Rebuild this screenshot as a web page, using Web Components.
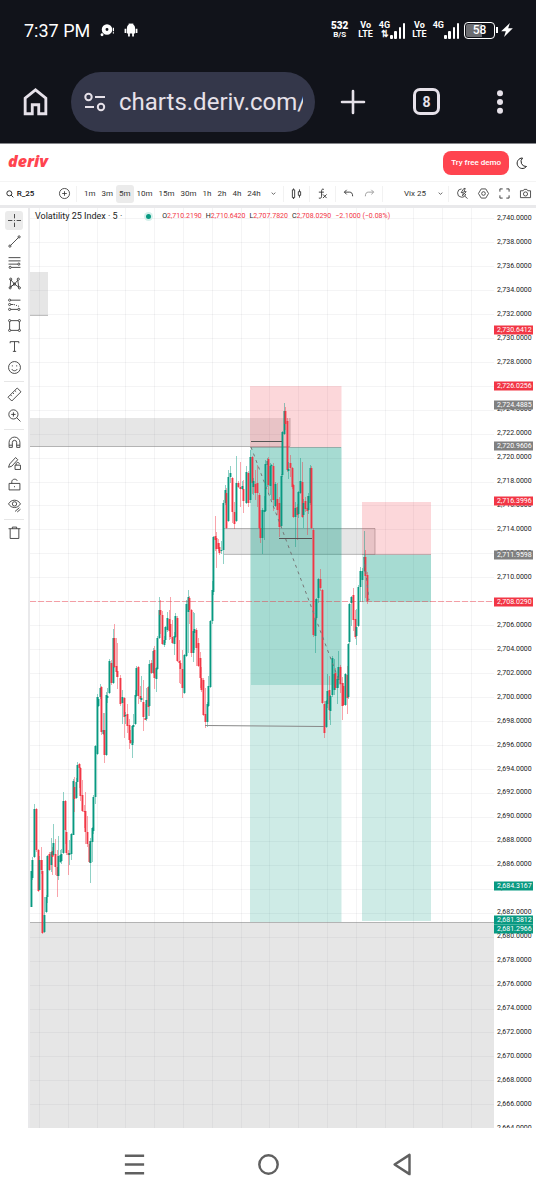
<!DOCTYPE html>
<html lang="en">
<head>
<meta charset="utf-8">
<meta name="viewport" content="width=device-width, initial-scale=1">
<title>Volatility 25 Index - Deriv charts</title>
<style>
  body {
    margin: 0;
    background: #fff;
    color: #222;
    font-family: Roboto, "Liberation Sans", sans-serif;
  }
</style>
</head>
<body>
<phone-screen>
  <status-bar slot="top"></status-bar>
  <browser-bar slot="top" url="charts.deriv.com/" tabs="8"></browser-bar>
  <site-header>Try free demo</site-header>
  <chart-toolbar symbol="R_25" active="5m" layout="Vix 25"></chart-toolbar>
  <chart-workspace>
    <drawing-tools slot="tools"></drawing-tools>
    <price-chart>
      <chart-legend slot="legend">Volatility 25 Index · 5 ·</chart-legend>
    </price-chart>
    <price-scale slot="scale"></price-scale>
  </chart-workspace>
  <nav-keys slot="bottom"></nav-keys>
</phone-screen>

<script>
/* Icons are drawn on a 24px grid. */
const ICONS = {
  home: `<path d="M4 21.5V9.5L12 3l8 6.5v12h-5.5v-7h-5v7z" stroke-width="2.2"/>`,
  tune: `<circle cx="5.5" cy="7" r="3.2"/><path d="M12 7h10M2 17h9"/><circle cx="18" cy="17" r="3.2"/>`,
  plus: `<path d="M12 1v22M1 12h22" stroke-width="2.6" stroke-linecap="round"/>`,
  dots: `<g fill="currentColor" stroke="none"><circle cx="12" cy="3.2" r="3"/><circle cx="12" cy="12" r="3"/><circle cx="12" cy="20.8" r="3"/></g>`,
  chat: `<g fill="currentColor" stroke="none"><path fill-rule="evenodd" d="M12 2a9 9 0 1 1 0 18a9 9 0 0 1 0-18zm0 6.5a2.5 2.5 0 1 0 0 5a2.5 2.5 0 0 0 0-5z"/><circle cx="3.5" cy="20" r="2.5"/><path d="M22 8h2v6h-2zM22 16h2v2h-2z"/></g>`,
  android: `<g fill="currentColor" stroke="none"><path d="M5 9a7 7 0 0 1 14 0v9h-2v5h-3v-5h-4v5H7v-5H5zM1 10h3v7H1zM20 10h3v7h-3z"/><path d="M8 1h8v3H8z"/></g>`,
  bolt: `<path fill="currentColor" stroke="none" d="M17 0L2 14h8l-3 10L22 9h-8z"/>`,
  moon: `<path d="M13 2A10.5 10.500 0 1 0 21 19A10 10 0 0 1 13 2z" stroke-width="2"/>`,
  search: `<circle cx="10" cy="10" r="7.5" stroke-width="2.6"/><path d="M15.5 15.5L22 22" stroke-width="2.6"/>`,
  add: `<circle cx="12" cy="12" r="11"/><path d="M12 7v10M7 12h10"/>`,
  chevron: `<path d="M3 8l9 8 9-8" stroke-width="3.4"/>`,
  candles: `<path d="M3 4h5v17H3zM5.5 1v3M5.5 21v3M16 8h5v8h-5zM18.5 3v5M18.5 16v5" stroke-width="2"/>`,
  fx: `<path d="M15 3c-4-2-5 1-5 4v11c0 4-2 5-6 4M4 9h11M13 14l8 8M21 14l-8 8" stroke-width="2"/>`,
  undo: `<path d="M8 4L3 9l5 5M3 9h11c5 0 7 3 7 9" stroke-width="2"/>`,
  redo: `<path d="M16 4l5 5-5 5M21 9H10c-5 0-7 3-7 9" stroke-width="2"/>`,
  quick: `<path d="M10 2A9 9 0 1 0 19 13M16 17l7 6M15 1L9 10h5l-2 7 8-9h-5l3-7z"/>`,
  settings: `<path d="M7 2h10l6 10-6 10H7L1 12z"/><circle cx="12" cy="12" r="4"/>`,
  full: `<path d="M2 8V2h6M16 2h6v6M22 16v6h-6M8 22H2v-6" stroke-width="2"/>`,
  camera: `<path d="M1 6h6l2-3h6l2 3h6v15H1z"/><circle cx="12" cy="13" r="4.5"/>`,
  cross: `<path d="M12 0v8M12 16v8M0 12h8M16 12h8M11 12h2"/>`,
  trend: `<path d="M5 19L19 5"/><circle cx="3.5" cy="20.5" r="2"/><circle cx="20.5" cy="3.5" r="2"/>`,
  fib: `<path d="M1 3h22M1 9h22M1 15h17M6 21h17"/><circle cx="20" cy="15" r="2"/><circle cx="4" cy="21" r="2"/>`,
  pattern: `<path d="M4 19L5 5l7 8 6-7 2 13-8-6zM5 18l7-5"/><circle cx="4" cy="20" r="2"/><circle cx="5" cy="4" r="2"/><circle cx="19" cy="4" r="2"/><circle cx="21" cy="20" r="2"/><circle cx="12" cy="13" r="2"/>`,
  forecast: `<path d="M5 4h18M5 12h5M5 21h13"/><path d="M11 12l11 4" stroke-dasharray="2 2"/><circle cx="3" cy="4" r="2"/><circle cx="3" cy="12" r="2"/><circle cx="3" cy="21" r="2"/><circle cx="20" cy="21" r="2"/>`,
  rect: `<path d="M5 3h14M5 21h14M3 5v14M21 5v14"/><circle cx="3" cy="3" r="2"/><circle cx="21" cy="3" r="2"/><circle cx="3" cy="21" r="2"/><circle cx="21" cy="21" r="2"/>`,
  text: `<path d="M4 6V3h16v3M12 3v18M9 21h6"/>`,
  smile: `<circle cx="12" cy="12" r="11"/><path d="M7 15c2 4 8 4 10 0M8 8v2M16 8v2"/>`,
  ruler: `<path d="M0 17L17 0l7 7L7 24zM5 13l2 2M9 9l2 2M13 5l2 2"/>`,
  zoom: `<circle cx="10" cy="10" r="8.5"/><path d="M10 6v8M6 10h8M16 16l7 7"/>`,
  magnet: `<path d="M2 21V12a10 10 0 0 1 20 0v9h-6v-9a4 4 0 0 0-8 0v9zM2 17h6M16 17h6"/>`,
  pencil: `<path d="M1 19l2-6L14 1l4 4L7 17zM13 15h10v8H13zM15 15v-2c0-4 6-4 6 0"/>`,
  lock: `<path d="M2 10h20v12H2zM7 10V7c0-6 9-6 10-2M12 15v2"/>`,
  eye: `<path d="M1 9c5-9 17-9 22 0-5 9-17 9-22 0z"/><circle cx="12" cy="9" r="4"/><path d="M13 23l8-7M17 24l6-5"/>`,
  trash: `<path d="M1 5h22M8 5V2h8v3M4 5v18h16V5"/>`,
  menu: `<path d="M1 2h22M1 12h22M1 22h22" stroke-width="2.8"/>`,
  circle: `<circle cx="12" cy="12" r="10.5" stroke-width="2.8"/>`,
  back: `<path d="M3 12L20 1v22z" stroke-width="2.8" stroke-linejoin="round"/>`,
};

class UiIcon extends HTMLElement {
  constructor() {
    super();
    this.attachShadow({ mode: "open" });
  }

  static get styles() {
    return /* css */`
      :host {
        display: inline-block;
        flex: none;
        width: var(--icon-size, 12px);
        height: var(--icon-size, 12px);
      }

      svg {
        display: block;
        width: 100%;
        height: 100%;
        overflow: visible;
        fill: none;
        stroke: currentColor;
        stroke-width: var(--icon-stroke, 1.6);
      }
    `;
  }

  connectedCallback() {
    this.shadowRoot.innerHTML = /* html */`
    <style>${UiIcon.styles}</style>
    <svg viewBox="0 0 24 24" aria-hidden="true">${ICONS[this.getAttribute("name")]}</svg>`;
  }
}

customElements.define("ui-icon", UiIcon);

/* Shared reset for every button in the page */
const BUTTON = /* css */`
  button {
    display: flex;
    align-items: center;
    justify-content: center;
    margin: 0;
    padding: 0;
    border: 0;
    background: none;
    color: inherit;
    font: inherit;
    cursor: pointer;
  }
`;

class PhoneScreen extends HTMLElement {
  constructor() {
    super();
    this.attachShadow({ mode: "open" });
  }

  connectedCallback() {
    this.shadowRoot.innerHTML = /* html */`
    <style>
      :host {
        display: flex;
        flex-direction: column;
        min-height: 100vh;
      }

      .top {
        background: #11131a;
        border-bottom: 1px solid #85868a;
      }

      main {
        flex: 1;
        display: flex;
        flex-direction: column;
      }
    </style>
    <div class="top"><slot name="top"></slot></div>
    <main><slot></slot></main>
    <slot name="bottom"></slot>`;
  }
}

customElements.define("phone-screen", PhoneScreen);

class StatusBar extends HTMLElement {
  constructor() {
    super();
    this.attachShadow({ mode: "open" });
  }

  static get styles() {
    return /* css */`
      :host {
        display: flex;
        align-items: center;
        height: 60px;
        padding: 0 22px 0 24px;
        color: #fff;
        --icon-size: 14px;
      }

      .time {
        font-size: 18px;
        margin-right: 10px;
      }

      .notices {
        display: flex;
        gap: 10px;
        flex: 1;
      }

      .signals {
        display: flex;
        align-items: center;
        gap: 6px;
      }

      .pair {
        display: flex;
        flex-direction: column;
        align-items: center;
        font-size: 9px;
        font-weight: 700;
        line-height: 9px;
      }

      .speed {
        margin-right: 4px;
        font-size: 8px;
      }

      .speed b {
        font-size: 10px;
      }

      .cell {
        display: flex;
        align-items: flex-end;
      }

      .cell .pair {
        height: 18px;
      }

      .cell svg {
        display: block;
        width: 16px;
        height: 17px;
        fill: #fff;
      }

      .battery {
        display: flex;
        align-items: center;
        margin-left: -2px;
      }

      .level {
        box-sizing: border-box;
        width: 31px;
        height: 17px;
        border: 1px solid #fff;
        border-radius: 4px;
        background: linear-gradient(90deg, #6b6c70 58%, transparent 58%) content-box;
        padding: 1px;
        font-size: 12px;
        font-weight: 500;
        line-height: 13px;
        text-align: center;
      }

      .cap {
        width: 2px;
        height: 6px;
        margin: 0 2px 0 1px;
        background: #fff;
      }
    `;
  }

  connectedCallback() {
    const bars = `<svg viewBox="0 0 16 17"><rect y="13" width="3" height="4" rx="1"/><rect x="4" y="9" width="3" height="8" rx="1"/><rect x="9" y="5" width="2" height="12" rx="1"/><rect x="13" y="1" width="2" height="16" rx="1"/></svg>`;
    this.shadowRoot.innerHTML = /* html */`
    <style>${StatusBar.styles}</style>
    <span class="time">7:37 PM</span>
    <div class="notices"><ui-icon name="chat"></ui-icon><ui-icon name="android"></ui-icon></div>
    <div class="signals">
      <span class="pair speed"><b>532</b><span>B/S</span></span>
      <span class="pair"><span>Vo</span><span>LTE</span></span>
      <span class="cell"><span class="pair"><span>4G</span><span>⇅</span></span>${bars}</span>
      <span class="pair"><span>Vo</span><span>LTE</span></span>
      <span class="cell"><span class="pair"><span>4G</span></span>${bars}</span>
      <span class="battery"><span class="level">58</span><span class="cap"></span><ui-icon name="bolt"></ui-icon></span>
    </div>`;
  }
}

customElements.define("status-bar", StatusBar);

class BrowserBar extends HTMLElement {
  constructor() {
    super();
    this.attachShadow({ mode: "open" });
  }

  static get styles() {
    return /* css */`
      :host {
        display: flex;
        align-items: center;
        height: 83px;
        padding: 0 24px 0 20px;
        color: #e6e1e9;
        --icon-size: 31px;
      }

      ${BUTTON}

      .address {
        flex: 1;
        min-width: 0;
        display: flex;
        align-items: center;
        gap: 12px;
        height: 60px;
        margin: 0 26px 0 20px;
        padding: 0 12px;
        box-sizing: border-box;
        border-radius: 30px;
        background: #34374a;
        --icon-size: 24px;
        --icon-stroke: 2;
      }

      input {
        flex: 1;
        min-width: 0;
        padding: 0;
        border: 0;
        background: none;
        color: inherit;
        font: 24px Roboto, "Liberation Sans", sans-serif;
        outline: 0;
      }

      .actions {
        display: flex;
        align-items: center;
        gap: 48px;
        --icon-size: 24px;
      }

      .tabs {
        box-sizing: border-box;
        width: 27px;
        height: 27px;
        border: 3px solid currentColor;
        border-radius: 7px;
        font-size: 14px;
        font-weight: 700;
      }
    `;
  }

  connectedCallback() {
    this.shadowRoot.innerHTML = /* html */`
    <style>${BrowserBar.styles}</style>
    <button aria-label="Home"><ui-icon name="home"></ui-icon></button>
    <div class="address">
      <ui-icon name="tune"></ui-icon>
      <input type="text" aria-label="Address" value="${this.getAttribute("url")}">
    </div>
    <div class="actions">
      <button aria-label="New tab"><ui-icon name="plus"></ui-icon></button>
      <button class="tabs" aria-label="Tabs">${this.getAttribute("tabs")}</button>
      <button aria-label="More"><ui-icon name="dots"></ui-icon></button>
    </div>`;
  }
}

customElements.define("browser-bar", BrowserBar);

class SiteHeader extends HTMLElement {
  constructor() {
    super();
    this.attachShadow({ mode: "open" });
  }

  static get styles() {
    return /* css */`
      :host {
        display: flex;
        align-items: center;
        height: 37px;
        padding: 0 8px;
      }

      ${BUTTON}

      a {
        flex: 1;
        color: #ff444f;
        font: italic 800 16px/18px "Open Sans", sans-serif;
        text-decoration: none;
        padding-bottom: 4px;
      }

      .demo {
        height: 24px;
        padding: 0 8px;
        border-radius: 8px;
        background: #ff444f;
        color: #fff;
        font-size: 8px;
        font-weight: 500;
        margin-right: 7px;
      }
    `;
  }

  connectedCallback() {
    this.shadowRoot.innerHTML = /* html */`
    <style>${SiteHeader.styles}</style>
    <a href="#">deriv</a>
    <button class="demo"><slot></slot></button>
    <button aria-label="Dark theme"><ui-icon name="moon"></ui-icon></button>`;
  }
}

customElements.define("site-header", SiteHeader);

class ChartToolbar extends HTMLElement {
  constructor() {
    super();
    this.attachShadow({ mode: "open" });
  }

  static get styles() {
    return /* css */`
      :host {
        display: flex;
        align-items: center;
        height: 23px;
        border-top: 1px solid #f4f4f4;
        border-bottom: 3px solid #e9e9eb;
        color: #333;
        font-size: 8px;
        --icon-size: 11px;
        --icon-stroke: 1.8;
      }

      ${BUTTON}

      .symbol {
        gap: 3px;
        width: 54px;
        margin-right: 4px;
        padding-right: 14px;
        box-sizing: border-box;
        color: #111;
        font-weight: 500;
        --icon-size: 8px;
      }

      .intervals {
        display: flex;
        margin-left: 4px;
      }

      .intervals button {
        height: 18px;
        padding: 0 3px;
        border-radius: 3px;
      }

      .intervals button.active {
        background: #ebebeb;
      }

      .small {
        --icon-size: 5px;
      }

      .group {
        display: flex;
        align-items: center;
        height: 16px;
        padding: 0 7px;
        border-right: 1px solid #f2f2f2;
      }

      .compare {
        padding: 0 6px 0 1px;
      }

      .history {
        gap: 10px;
      }

      .redo {
        opacity: 0.5;
      }

      .layout {
        flex: 1;
        justify-content: flex-end;
        gap: 12px;
        padding-right: 5px;
      }

      .view {
        gap: 10px;
        padding: 0 5px 0 8px;
        border: 0;
      }
    `;
  }

  connectedCallback() {
    const active = this.getAttribute("active");
    const intervals = ["1m", "3m", "5m", "10m", "15m", "30m", "1h", "2h", "4h", "24h"];
    this.shadowRoot.innerHTML = /* html */`
    <style>${ChartToolbar.styles}</style>
    <button class="symbol"><ui-icon name="search"></ui-icon>${this.getAttribute("symbol")}</button>
    <div class="group compare"><button aria-label="Compare"><ui-icon name="add"></ui-icon></button></div>
    <div class="intervals">
      ${intervals.map((t) => `<button class="${t === active ? "active" : ""}">${t}</button>`).join("")}
    </div>
    <div class="group small"><button aria-label="More intervals"><ui-icon name="chevron"></ui-icon></button></div>
    <div class="group"><button aria-label="Chart type"><ui-icon name="candles"></ui-icon></button></div>
    <div class="group"><button aria-label="Indicators"><ui-icon name="fx"></ui-icon></button></div>
    <div class="group history">
      <button aria-label="Undo"><ui-icon name="undo"></ui-icon></button>
      <button class="redo" aria-label="Redo"><ui-icon name="redo"></ui-icon></button>
    </div>
    <div class="group layout small">
      <button>${this.getAttribute("layout")}</button>
      <button aria-label="Layouts"><ui-icon name="chevron"></ui-icon></button>
    </div>
    <div class="group view">
      <button aria-label="Quick search"><ui-icon name="quick"></ui-icon></button>
      <button aria-label="Settings"><ui-icon name="settings"></ui-icon></button>
      <button aria-label="Fullscreen"><ui-icon name="full"></ui-icon></button>
      <button aria-label="Snapshot"><ui-icon name="camera"></ui-icon></button>
    </div>`;
  }
}

customElements.define("chart-toolbar", ChartToolbar);

class ChartWorkspace extends HTMLElement {
  constructor() {
    super();
    this.attachShadow({ mode: "open" });
  }

  connectedCallback() {
    this.shadowRoot.innerHTML = /* html */`
    <style>
      :host {
        flex: 1;
        display: flex;
        min-height: 480px;
      }
    </style>
    <slot name="tools"></slot>
    <slot></slot>
    <slot name="scale"></slot>`;
  }
}

customElements.define("chart-workspace", ChartWorkspace);

class DrawingTools extends HTMLElement {
  constructor() {
    super();
    this.attachShadow({ mode: "open" });
  }

  static get styles() {
    return /* css */`
      :host {
        display: flex;
        flex-direction: column;
        align-items: center;
        width: 28px;
        padding-top: 2px;
        border-right: 2px solid #e9e9eb;
        color: #333;
        --icon-size: 13px;
        --icon-stroke: 1.6;
      }

      ${BUTTON}

      button {
        width: 18px;
        height: 19px;
        margin: 1px 0;
        border-radius: 3px;
      }

      button.active {
        background: #ebebeb;
      }

      hr {
        width: 20px;
        height: 1px;
        margin: 3px 0 2px;
        border: 0;
        background: #e6e6e6;
      }
    `;
  }

  connectedCallback() {
    const groups = [
      ["cross", "trend", "fib", "pattern", "forecast", "rect", "text", "smile"],
      ["ruler", "zoom"],
      ["magnet", "pencil", "lock", "eye"],
      ["trash"],
    ];
    const button = (name) => `<button class="${name === "cross" ? "active" : ""}" aria-label="${name}"><ui-icon name="${name}"></ui-icon></button>`;
    this.shadowRoot.innerHTML = /* html */`
    <style>${DrawingTools.styles}</style>
    ${groups.map((g) => g.map(button).join("")).join("<hr>")}`;
  }
}

customElements.define("drawing-tools", DrawingTools);

class ChartLegend extends HTMLElement {
  constructor() {
    super();
    this.attachShadow({ mode: "open" });
  }

  static get styles() {
    return /* css */`
      :host {
        display: flex;
        align-items: center;
        height: 10px;
        font-size: 9px;
        line-height: 10px;
        white-space: nowrap;
        color: #222;
      }

      .dot {
        width: 5px;
        height: 5px;
        margin: 0 11px 0 24px;
        border-radius: 50%;
        background: #089981;
        box-shadow: 0 0 0 2px #d5f0eb;
      }

      .values {
        display: flex;
        gap: 4px;
        font-size: 7px;
      }

      b {
        color: #f23645;
        font-weight: 400;
      }
    `;
  }

  connectedCallback() {
    this.shadowRoot.innerHTML = /* html */`
    <style>${ChartLegend.styles}</style>
    <slot></slot><span class="dot"></span>
    <span class="values">
      <span>O<b>2,710.2190</b></span>
      <span>H<b>2,710.6420</b></span>
      <span>L<b>2,707.7820</b></span>
      <span>C<b>2,708.0290</b></span>
      <b>−2.1000 (−0.08%)</b>
    </span>`;
  }
}

customElements.define("chart-legend", ChartLegend);

/* One candle per entry: x, high, body top, body bottom, low, (u)p or (d)own */
const CANDLES = `
31 871 871 907 907 u,32 857 860 878 880 u,34 804 809 857 858 u,36 808 809 850 852 d,38 849 850 891 892 d,39 856 860 890 890 u,
41 847 860 870 874 d,42 860 871 933 934 d,44 897 915 932 933 u,46 895 897 912 913 u,47 855 856 897 903 u,49 852 854 870 871 d,
51 838 852 865 872 u,52 847 851 857 875 d,53 824 843 855 856 u,55 839 854 867 875 d,57 850 867 876 897 d,58 836 856 876 880 u,
60 850 855 862 863 u,61 849 854 861 864 u,63 792 801 853 854 u,65 800 801 830 844 d,66 830 832 853 855 d,68 850 853 855 875 d,
69 840 853 855 865 u,71 833 834 854 860 u,73 779 781 835 835 u,74 777 787 799 812 d,76 778 782 798 799 u,77 762 765 782 782 u,
79 763 764 768 788 d,80 767 768 796 801 d,82 780 795 811 812 d,84 805 811 812 828 d,85 792 811 832 844 d,87 816 832 844 847 d,
89 841 844 862 863 d,90 838 841 863 883 u,92 827 828 842 862 u,93 795 797 831 834 u,95 745 746 797 804 u,97 694 697 754 755 u,
98 697 699 706 707 u,100 684 688 697 699 u,101 686 687 732 735 d,103 713 730 734 735 u,104 713 730 755 763 d,106 692 695 755 756 u,
107 688 696 698 703 u,109 659 661 693 694 u,111 660 663 683 685 d,113 629 638 683 684 u,114 624 638 667 668 d,116 638 666 672 677 d,
117 643 671 677 689 d,120 675 678 704 706 d,122 690 697 703 724 u,124 697 698 717 738 d,125 712 715 716 724 u,127 704 714 726 733 d,
129 719 725 740 749 d,130 730 740 743 744 d,132 725 726 745 758 u,133 714 725 727 743 u,135 690 695 724 725 u,136 666 668 696 697 u,
138 666 667 696 704 d,140 686 696 699 702 d,141 676 698 700 702 u,143 680 702 717 731 d,145 704 718 720 720 d,146 688 700 719 721 u,
148 686 687 707 716 d,149 660 664 706 716 u,151 660 663 673 674 d,153 648 651 673 674 u,154 646 650 678 689 d,156 667 668 679 692 u,
157 636 638 669 670 u,159 597 610 638 639 u,160 600 610 615 634 d,162 611 615 644 645 d,164 636 640 645 647 u,165 626 627 640 643 u,
167 612 618 630 632 u,169 610 619 631 640 d,170 597 624 637 639 d,172 620 637 643 644 d,174 632 636 644 655 u,175 613 616 637 638 u,
177 616 618 661 662 d,179 640 661 663 683 d,180 660 663 669 684 d,182 650 669 688 698 d,184 654 655 693 694 u,186 600 604 656 657 u,
188 590 597 612 653 u,189 596 598 610 624 d,191 609 610 653 657 d,193 612 631 653 662 u,194 613 629 633 650 u,196 628 630 648 666 d,
198 638 643 666 667 d,200 652 658 678 688 d,201 667 678 690 692 d,203 678 680 715 716 d,205 688 714 722 728 d,207 702 704 722 727 u,
208 676 686 706 707 u,210 620 621 687 688 u,212 581 590 621 624 u,213 536 537 592 595 u,215 516 536 540 551 d,216 532 538 549 568 d,
218 539 543 549 551 d,219 543 547 553 555 d,221 541 550 551 554 u,223 500 503 550 564 u,225 485 490 503 505 u,226 488 493 528 529 d,
228 470 477 521 522 u,230 466 473 477 483 u,232 477 478 512 523 d,234 502 512 524 529 d,236 456 483 521 522 u,238 481 483 487 488 d,
240 462 487 489 507 d,242 481 486 489 490 u,243 480 489 501 513 d,246 466 472 503 504 u,248 471 473 503 507 d,250 450 457 500 503 u,
252 456 457 483 494 d,253 478 481 487 495 u,255 470 484 493 500 d,257 465 483 493 507 d,259 493 495 528 529 d,260 510 528 538 543 d,
262 508 510 538 554 u,264 496 510 512 540 u,265 460 464 511 512 u,267 458 461 465 487 u,268 457 459 485 493 d,270 463 466 486 495 u,
271 464 465 466 500 u,273 463 466 500 511 d,275 482 484 506 507 u,277 483 499 510 515 d,279 497 503 527 537 d,281 474 476 526 527 u,
282 431 432 475 477 u,284 403 411 434 435 u,285 407 411 424 430 d,287 418 421 470 472 d,288 462 469 471 479 u,290 455 463 468 477 d,
292 467 468 487 489 d,293 484 485 517 518 d,295 502 508 517 547 u,297 504 507 515 540 d,298 491 492 514 518 u,300 458 481 493 494 u,
302 462 482 517 518 d,303 499 503 515 528 u,305 497 501 509 512 d,307 496 508 511 535 d,308 493 496 510 514 u,310 465 468 503 505 u,
311 466 468 528 529 d,313 528 530 635 637 d,315 599 618 636 653 u,316 598 599 618 619 u,318 578 579 598 603 u,320 569 579 588 591 d,
322 589 590 703 704 d,324 701 704 733 738 d,326 700 701 727 728 u,327 674 691 704 708 u,329 676 690 710 720 d,330 695 696 711 725 u,
332 656 658 695 697 u,334 659 674 690 695 u,335 668 673 688 690 d,337 676 679 688 704 u,338 651 667 680 688 u,340 665 667 684 693 d,
342 677 683 706 720 d,343 683 686 705 706 d,345 673 674 705 706 u,347 666 675 698 714 d,348 643 644 697 699 u,349 603 604 642 644 u,
351 596 597 603 626 u,353 588 595 620 631 d,355 610 619 637 639 d,356 609 627 636 645 u,358 585 587 626 627 u,360 567 571 587 602 u,
362 568 571 580 602 u,364 531 557 571 572 u,365 550 557 576 598 d,367 572 575 601 604 d
`.trim().split(",").map((row) => row.trim().split(" "));

class PriceChart extends HTMLElement {
  constructor() {
    super();
    this.attachShadow({ mode: "open" });
  }

  static get styles() {
    return /* css */`
      :host {
        position: relative;
        flex: 1;
        min-width: 0;
        overflow: hidden;
      }

      svg {
        display: block;
        width: 100%;
        height: 100%;
      }

      .legend {
        position: absolute;
        top: 3px;
        left: 5px;
      }

      .grid {
        stroke: #2a2e39;
        stroke-opacity: 0.05;
      }

      .zone {
        fill: #808080;
        fill-opacity: 0.2;
      }

      .edge {
        fill: none;
        stroke: #808080;
        stroke-opacity: 0.5;
      }

      .loss {
        fill: #f23645;
        fill-opacity: 0.2;
      }

      .gain {
        fill: #089981;
        fill-opacity: 0.2;
      }

      .mark {
        fill: none;
        stroke: #555;
      }

      .low {
        stroke: #888;
      }

      .path {
        fill: none;
        stroke: #777;
        stroke-dasharray: 3 4;
      }

      .last {
        stroke: #f23645;
        stroke-opacity: 0.45;
        stroke-dasharray: 6 2;
      }

      .u { fill: #089981; }
      .d { fill: #f23645; }
      .wick { fill-opacity: 0.45; }
    `;
  }

  grid() {
    let lines = "";
    for (let i = 0; i < 16; i++) {
      const x = Math.round(39 + i * 28.8) + 0.5;
      lines += `<path d="M${x} 208V1128"/>`;
    }
    for (let i = 0; i < 38; i++) {
      const y = Math.round(218 + i * 23.955) + 0.5;
      lines += `<path d="M30 ${y}H494"/>`;
    }
    return lines;
  }

  candles() {
    return CANDLES.map(([x, high, top, bottom, low, dir]) => `
      <rect class="${dir} wick" x="${x}" y="${high}" width="1" height="${low - high}"/>
      <rect class="${dir}" x="${x - 0.5}" y="${top}" width="1.9" height="${Math.max(1, bottom - top)}"/>`).join("");
  }

  connectedCallback() {
    this.shadowRoot.innerHTML = /* html */`
    <style>${PriceChart.styles}</style>
    <svg viewBox="30 208 464 920" preserveAspectRatio="none" role="img" aria-label="Candlestick chart">
      <g class="grid">${this.grid()}</g>
      <g class="zone">
        <rect x="30" y="272" width="18" height="43"/>
        <rect x="30" y="418" width="260" height="29"/>
        <rect x="224" y="528" width="151" height="26"/>
        <rect x="30" y="922" width="464" height="206"/>
      </g>
      <g class="edge">
        <path d="M30 315.5H48M30 446.5H290V418M224 528.5H375V554.5H224M30 922.5H494"/>
      </g>
      <g class="loss">
        <rect x="250" y="386" width="91.5" height="61"/>
        <rect x="362" y="502" width="69" height="53"/>
      </g>
      <g class="gain">
        <rect x="250" y="447" width="91.5" height="475"/>
        <rect x="251" y="447" width="90.5" height="238"/>
        <rect x="362" y="555" width="69" height="366"/>
        <rect x="364" y="555" width="67" height="47"/>
      </g>
      <path class="edge" d="M250 447.5H341M362 554.5H431"/>
      <path class="last" d="M30 601.5H494"/>
      ${this.candles()}
      <path class="path" d="M251 447L340 683M364 557L369 600"/>
      <path class="mark" d="M251 441.5H282M279 538.5H312"/>
      <path class="mark low" d="M205 725.5L324 726.5"/>
    </svg>
    <div class="legend"><slot name="legend"></slot></div>`;
  }
}

customElements.define("price-chart", PriceChart);

class PriceScale extends HTMLElement {
  constructor() {
    super();
    this.attachShadow({ mode: "open" });
  }

  static get styles() {
    return /* css */`
      :host {
        position: relative;
        width: 42px;
        overflow: hidden;
        font-size: 7px;
        color: #222;
      }

      ol {
        position: absolute;
        inset: -2px 0 0;
        margin: 0;
        padding: 0;
        list-style: none;
      }

      /* the last tick runs past the bottom of the pane */
      li {
        display: flex;
        align-items: center;
        height: calc(100% / 38.5);
        padding-left: 3px;
      }

      .tag {
        position: absolute;
        left: 0;
        width: 36px;
        height: 9px;
        padding-left: 3px;
        line-height: 9px;
        transform: translateY(-50%);
        color: #fff;
      }

      .red { background: #f23645; }
      .gray { background: #808080; }
      .green { background: #089981; }
    `;
  }

  connectedCallback() {
    const format = (n) => n.toLocaleString("en-US", { minimumFractionDigits: 4 });
    const ticks = Array.from({ length: 39 }, (_, i) => 2740 - i * 2);
    /* price, colour, distance from the top of the pane in percent */
    const tags = [
      ["2,730.6412", "red", 13.3],
      ["2,726.0256", "red", 19.3],
      ["2,724.4885", "gray", 21.4],
      ["2,720.9606", "gray", 25.9],
      ["2,716.3996", "red", 31.9],
      ["2,711.9598", "gray", 37.7],
      ["2,708.0290", "red", 42.8],
      ["2,684.3167", "green", 73.7],
      ["2,681.3812", "green", 77.4],
      ["2,681.2966", "green", 78.4],
    ];
    this.shadowRoot.innerHTML = /* html */`
    <style>${PriceScale.styles}</style>
    <ol>${ticks.map((t) => `<li>${format(t)}</li>`).join("")}</ol>
    ${tags.map(([price, colour, top]) => `<span class="tag ${colour}" style="top:${top}%">${price}</span>`).join("")}`;
  }
}

customElements.define("price-scale", PriceScale);

class NavKeys extends HTMLElement {
  constructor() {
    super();
    this.attachShadow({ mode: "open" });
  }

  connectedCallback() {
    this.shadowRoot.innerHTML = /* html */`
    <style>
      :host {
        display: flex;
        align-items: center;
        justify-content: space-between;
        height: 72px;
        padding: 0 calc(25% - 12px);
        color: #606060;
        --icon-size: 21px;
      }

      ${BUTTON}

      button {
        width: 24px;
        height: 24px;
      }
    </style>
    <button aria-label="Recent apps"><ui-icon name="menu"></ui-icon></button>
    <button aria-label="Home screen"><ui-icon name="circle"></ui-icon></button>
    <button aria-label="Back"><ui-icon name="back"></ui-icon></button>`;
  }
}

customElements.define("nav-keys", NavKeys);
</script>
</body>
</html>
